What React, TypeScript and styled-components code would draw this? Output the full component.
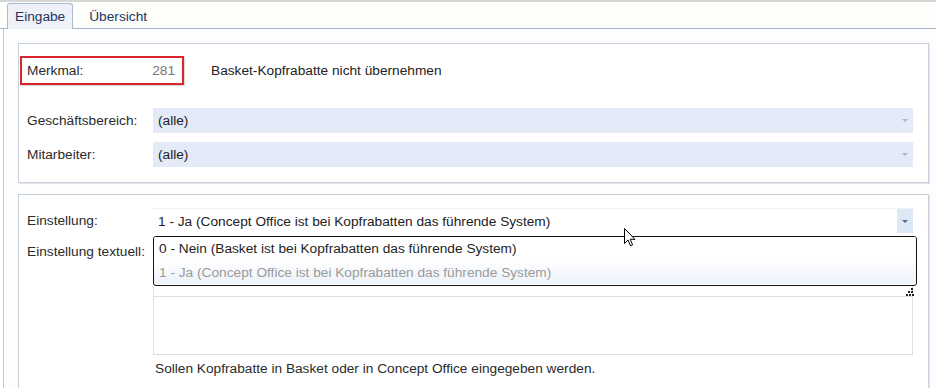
import React from "react";
import styled, { createGlobalStyle } from "styled-components";

const Global = createGlobalStyle`
  html, body { margin: 0; padding: 0; background: #ffffff; }
  body { font-family: "Liberation Sans", Arial, sans-serif; font-size: 13.7px; color: #222; }
  * { box-sizing: border-box; }
`;

const Page = styled.div`
  position: relative;
  width: 936px;
  height: 388px;
  overflow: hidden;
  background: #ffffff;
  border-top: 2px solid #d6d6d6;
  display: flex;
  flex-direction: column;
`;

const TabStrip = styled.div`
  height: 27px;
  flex-shrink: 0;
  display: flex;
  align-items: flex-end;
  padding-left: 7px;
  background: #fefefb;
  border-bottom: 1px solid #a6b6cf;
`;

const Tab = styled.div<{ $active?: boolean }>`
  height: ${(p) => (p.$active ? "26px" : "24px")};
  margin-bottom: ${(p) => (p.$active ? "-1px" : "0")};
  padding: 0 ${(p) => (p.$active ? "7px" : "8px")};
  display: flex;
  align-items: center;
  color: #22355f;
  background: ${(p) => (p.$active ? "#eef2f8" : "transparent")};
  border: ${(p) => (p.$active ? "1px solid #a9b9d1" : "1px solid transparent")};
  border-bottom: none;
  border-radius: 3px 3px 0 0;
  margin-right: 7px;
`;

const Body = styled.div`
  flex: 1;
  min-height: 0;
  display: flex;
  flex-direction: column;
  gap: 11px;
  padding: 14px 7px 0 14px;
  margin-left: 3px;
  border-left: 1px solid #b9c9de;
  background: #fcfdfe;
`;

const Panel = styled.div<{ $open?: boolean }>`
  flex-shrink: 0;
  display: flex;
  flex-direction: column;
  background: #ffffff;
  border: 1px solid #c9d0da;
  box-shadow: 1px 1px 0 #e4e6ea;
  padding: ${(p) => (p.$open ? "13px 15px 40px 8px" : "12px 15px 15px 1px")};
`;

const MerkmalRow = styled.div`
  display: flex;
  align-items: center;
  gap: 27px;
  margin-bottom: 23px;
`;

const RedBox = styled.div`
  width: 164px;
  height: 29px;
  border: 2px solid #d8262c;
  box-shadow: 1px 1px 1px rgba(0, 0, 0, 0.15);
  display: flex;
  align-items: center;
  justify-content: space-between;
  padding: 0 7px 0 5px;
`;

const Label = styled.span`
  color: #2b2b2b;
`;

const Grey = styled.span`
  color: #777777;
`;

const Row = styled.div<{ $gap?: number; $indent?: number }>`
  display: grid;
  grid-template-columns: 126px 1fr;
  align-items: center;
  margin-left: ${(p) => p.$indent ?? 0}px;
  margin-bottom: ${(p) => p.$gap ?? 0}px;
`;

const Field = styled.div<{ $filled?: boolean }>`
  position: relative;
  height: 25px;
  display: flex;
  align-items: center;
  padding-left: 5px;
  background: ${(p) => (p.$filled ? "#e4eaf7" : "#ffffff")};
  border-top: ${(p) => (p.$filled ? "none" : "1px solid #eef0f3")};
`;

const Arrow = styled.div<{ $button?: boolean }>`
  position: absolute;
  right: 0;
  top: 0;
  bottom: 0;
  width: 16px;
  display: flex;
  align-items: center;
  justify-content: center;
  background: ${(p) => (p.$button ? "#dde8f6" : "transparent")};
  &::after {
    content: "";
    border-left: 3px solid transparent;
    border-right: 3px solid transparent;
    border-top: 3px solid ${(p) => (p.$button ? "#5a6680" : "#b0b6c2")};
  }
`;

const TopRow = styled.div`
  display: grid;
  grid-template-columns: 126px 1fr;
  align-items: start;
  margin-top: 8px;
`;

const TopLabel = styled.span`
  color: #2b2b2b;
  padding-top: 3px;
`;

const Memo = styled.div`
  height: 114px;
  display: flex;
  flex-direction: column;
  border: 1px solid #dcdfe3;
  border-top: none;
`;

const MemoHead = styled.div`
  height: 56px;
  border-bottom: 1px solid #dcdfe3;
`;

const Help = styled.div`
  margin: 6px 0 0 128px;
  color: #2b2b2b;
`;

const ListBox = styled.div`
  position: absolute;
  left: 153px;
  top: 234px;
  width: 764px;
  height: 50px;
  border: 1.5px solid #111111;
  border-radius: 3px;
  background: #ffffff;
  display: flex;
  flex-direction: column;
  overflow: hidden;
`;

const ListItem = styled.div<{ $muted?: boolean }>`
  height: 23.5px;
  display: flex;
  align-items: center;
  padding-left: 5px;
  color: ${(p) => (p.$muted ? "#9a9a9a" : "#1e1e1e")};
  background: ${(p) =>
    p.$muted ? "linear-gradient(#ffffff, #f7f9fd 40%, #eef3fa)" : "#ffffff"};
`;

const Grip = styled.svg`
  position: absolute;
  left: 906px;
  top: 286px;
`;

const Cursor = styled.svg`
  position: absolute;
  left: 624px;
  top: 226px;
`;

export default function App() {
  return (
    <>
      <Global />
      <Page>
        <TabStrip>
          <Tab $active>Eingabe</Tab>
          <Tab>Übersicht</Tab>
        </TabStrip>
        <Body>
          <Panel>
            <MerkmalRow>
              <RedBox>
                <Label>Merkmal:</Label>
                <Grey>281</Grey>
              </RedBox>
              <span>Basket-Kopfrabatte nicht übernehmen</span>
            </MerkmalRow>
            <Row $indent={7} $gap={9}>
              <Label>Geschäftsbereich:</Label>
              <Field $filled>
                (alle)
                <Arrow />
              </Field>
            </Row>
            <Row $indent={7}>
              <Label>Mitarbeiter:</Label>
              <Field $filled>
                (alle)
                <Arrow />
              </Field>
            </Row>
          </Panel>
          <Panel $open>
            <Row>
              <Label>Einstellung:</Label>
              <Field>
                1 - Ja (Concept Office ist bei Kopfrabatten das führende System)
                <Arrow $button />
              </Field>
            </Row>
            <TopRow>
              <TopLabel>Einstellung textuell:</TopLabel>
              <Memo>
                <MemoHead />
              </Memo>
            </TopRow>
            <Help>Sollen Kopfrabatte in Basket oder in Concept Office eingegeben werden.</Help>
          </Panel>
        </Body>
        <ListBox>
          <ListItem>0 - Nein (Basket ist bei Kopfrabatten das führende System)</ListItem>
          <ListItem $muted>1 - Ja (Concept Office ist bei Kopfrabatten das führende System)</ListItem>
        </ListBox>
        <Grip width="8" height="8" viewBox="0 0 8 8">
          <rect x="5" y="0" width="2" height="2" fill="#222" />
          <rect x="2" y="3" width="2" height="2" fill="#222" />
          <rect x="5" y="3" width="2" height="2" fill="#222" />
          <rect x="0" y="6" width="2" height="2" fill="#222" />
          <rect x="3" y="6" width="2" height="2" fill="#222" />
          <rect x="6" y="6" width="2" height="2" fill="#222" />
        </Grip>
        <Cursor width="12" height="19" viewBox="0 0 12 19">
          <path
            d="M0.5 0.5 L0.5 15.5 L4 12 L6.5 17.8 L8.6 16.9 L6.2 11.3 L11 11.3 Z"
            fill="#ffffff"
            stroke="#000000"
            strokeWidth="1"
            strokeLinejoin="round"
          />
        </Cursor>
      </Page>
    </>
  );
}
